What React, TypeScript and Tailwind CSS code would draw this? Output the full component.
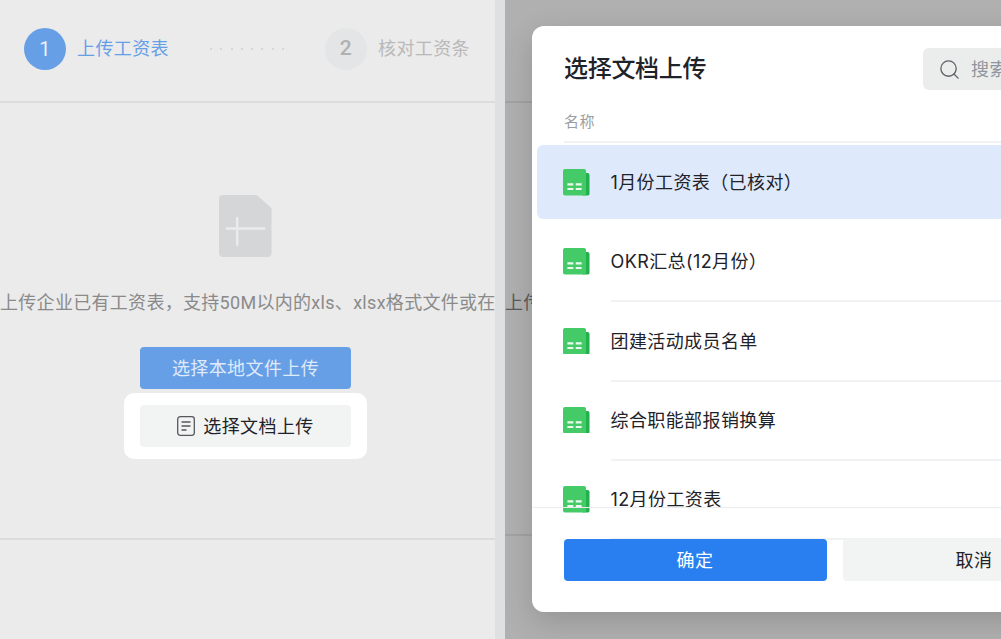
import { Search } from 'lucide-react'

const files = ['1月份工资表（已核对）', 'OKR汇总(12月份）', '团建活动成员名单', '综合职能部报销换算', '12月份工资表']

function SheetIcon() {
  return (
    <svg width="26.500" height="26.500" viewBox="0 0 27 27" className="shrink-0">
      <path d="M20 4h5a2 2 0 0 1 2 2v19.500a1.500 1.500 0 0 1-1.500 1.500H20z" fill="#21b24d" />
      <rect x="0" y="0" width="23.500" height="27" rx="2" fill="#44cb68" />
      <path d="M4.500 14.500h6v2.200h-6zM13 14.500h6v2.200h-6zM4.500 19.300h6v2.200h-6zM13 19.300h6v2.200h-6z" fill="#eafaee" />
    </svg>
  )
}

function FileAddIcon() {
  return (
    <svg width="53" height="64" viewBox="0 0 54 64">
      <path
        d="M4 0.500h34.500L53.500 14v45.500a4 4 0 0 1-4 4H4a4 4 0 0 1-4-4v-55a4 4 0 0 1 4-4z"
        fill="#d5d6d8"
      />
      <path d="M7 34.500h40M18.500 23v29" stroke="#ebebeb" strokeWidth="2.500" />
    </svg>
  )
}

function DocIcon() {
  return (
    <svg width="18" height="20" viewBox="0 0 18 20" fill="none" stroke="#55585c" strokeWidth="1.300">
      <rect x="0.700" y="0.700" width="16.600" height="18.600" rx="2.500" />
      <path d="M4.500 6h9M4.500 10h9M4.500 14h5" />
    </svg>
  )
}

function Dimmed() {
  return (
    <div className="flex-1 bg-[#b0b0b0] overflow-hidden">
      <div className="h-[103px] border-b-2 border-[#a2a2a2]" />
      <p className="mt-[188px] h-[245px] border-b-2 border-[#a2a2a2] text-[18px] leading-6 text-[#5a5a5a] whitespace-nowrap">
        上传企业已有工资表
      </p>
    </div>
  )
}

export default function App() {
  return (
    <div className="relative w-[1001px] h-[639px] overflow-hidden flex font-['Inter','Noto_Sans_CJK_SC',sans-serif] tracking-[0.4px]">
      {/* left: upload page */}
      <div className="w-[495px] shrink-0 bg-[#ebebeb] overflow-hidden flex flex-col">
        <div className="h-[103px] shrink-0 border-b-2 border-[#dcdcdc] flex items-start pt-[28px] pl-6">
          <div className="w-[42px] h-[42px] rounded-full bg-[#669fe6] flex items-center justify-center text-[20px] text-[#e6effb] font-['Roboto',sans-serif]">
            1
          </div>
          <span className="ml-[11px] text-[18px] leading-[42px] text-[#669fe6]">上传工资表</span>
          <div className="ml-[41px] w-[74px] h-[42px] flex items-center justify-between">
            {[0, 1, 2, 3, 4, 5, 6, 7].map(i => (
              <i key={i} className="block w-[2px] h-[2px] rounded-full bg-[#cfcfcf]" />
            ))}
          </div>
          <div className="ml-[41px] w-[42px] h-[42px] rounded-full bg-[#e4e5e6] flex items-center justify-center text-[21px] font-medium text-[#b0b1b3] font-['Roboto',sans-serif]">
            2
          </div>
          <span className="ml-[11px] text-[18px] leading-[42px] text-[#b9b9b9]">核对工资条</span>
        </div>

        <div className="w-[491px] h-[435px] shrink-0 flex flex-col items-center pt-[91px]">
          <FileAddIcon />
          <p className="self-start mt-[33px] text-[18px] leading-6 text-[#8a8a8a] whitespace-nowrap tracking-[0.3px] font-['Roboto','Noto_Sans_CJK_SC',sans-serif]">
            上传企业已有工资表，支持50M以内的xls、xlsx格式文件或在线文档
          </p>
          <button className="mt-[32px] w-[211px] h-[42px] shrink-0 rounded bg-[#679fe6] text-[18px] text-[#dfeafa]">
            选择本地文件上传
          </button>
          <div className="mt-1 bg-white rounded-[10px] px-4 py-3">
            <button className="w-[211px] h-[42px] rounded bg-[#f2f3f3] flex items-center justify-center gap-2 text-[18px] text-[#1f2329]">
              <DocIcon />
              选择文档上传
            </button>
          </div>
        </div>
        <div className="h-[2px] bg-[#dcdcdc]" />
      </div>

      <div className="w-[10px] shrink-0 bg-[#dfe0e2]" />

      <Dimmed />

      {/* modal */}
      <div className="absolute left-[532px] top-[26px] w-[605px] h-[586px] bg-white rounded-xl shadow-[0_10px_30px_rgba(0,0,0,0.16)] overflow-hidden">
        <div className="flex items-center justify-between pl-8 pr-8 pt-[22px]">
          <h2 className="text-[24px] leading-[42px] font-medium text-[#1f2329] tracking-[-0.3px]">选择文档上传</h2>
          <div className="w-[182px] h-[42px] rounded-md bg-[#ebecec] flex items-center gap-[10px] pl-[15px] text-[18px] text-[#8f959e]">
            <Search size={23} strokeWidth={1.4} className="text-[#5f6368]" />
            搜索文档
          </div>
        </div>
        <div className="mx-8 mt-5 h-[33px] border-b-2 border-[#f1f2f3] text-[15px] leading-6 text-[#9a9da2]">名称</div>
        <ul className="mt-[2px] ml-[5px]">
          {files.map((name, i) => (
            <li key={name} className={`h-[74px] mb-[5.250px] flex pl-[26px] rounded-md ${i === 0 ? 'bg-[#deeafc]' : ''}`}>
              <div className="pt-6">
                <SheetIcon />
              </div>
              <div className={`ml-[21px] flex-1 h-[78px] leading-[75px] text-[18px] text-[#1f2329] ${i === 0 ? '' : 'border-b-2 border-[#f1f2f3]'}`}>
                {name}
              </div>
            </li>
          ))}
        </ul>
        {/* footer sits over the scrolled list */}
        <div className="absolute left-0 right-0 bottom-0 h-[105px] border-t border-[#ebecee] flex gap-4 pl-[31.500px] pt-[31px]">
          <button className="w-[263px] h-[42px] rounded bg-[#2a7ff0] text-[18px] text-white">确定</button>
          <button className="w-[263px] h-[42px] rounded bg-[#f2f3f3] text-[18px] text-[#1f2329]">取消</button>
        </div>
      </div>
    </div>
  )
}
